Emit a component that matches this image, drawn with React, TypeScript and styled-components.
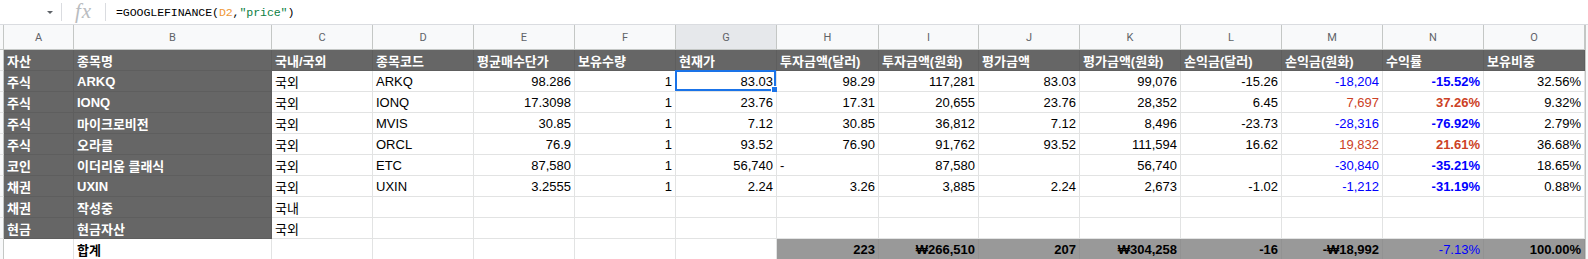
import React from 'react';
import styled, { createGlobalStyle } from 'styled-components';

const GlobalStyle = createGlobalStyle`
  html, body {
    margin: 0;
    padding: 0;
    background: #ffffff;
    overflow: hidden;
  }
  body {
    font-family: 'Liberation Sans', Arial, 'Noto Sans CJK KR', sans-serif;
  }
`;

/* column widths, including the 1px right border */
const COLS = '4px 70px 198px 101px 101px 101px 101px 101px 102px 100px 101px 101px 101px 101px 101px 101px 1fr';
const LETTERS = ['A', 'B', 'C', 'D', 'E', 'F', 'G', 'H', 'I', 'J', 'K', 'L', 'M', 'N', 'O'];

const BLUE = '#0000ff';
const RED = '#cc4125';

type Tone = 'plain' | 'blue' | 'red';

interface Holding {
  asset: string;
  name: string;
  region: string;
  code?: string;
  avg?: string;
  qty?: string;
  price?: string;
  invUsd?: string;
  invKrw?: string;
  evalUsd?: string;
  evalKrw?: string;
  plUsd?: string;
  plKrw?: string;
  rate?: string;
  weight?: string;
  tone?: Tone;
}

const holdings: Holding[] = [
  { asset: '주식', name: 'ARKQ', region: '국외', code: 'ARKQ', avg: '98.286', qty: '1', price: '83.03', invUsd: '98.29', invKrw: '117,281', evalUsd: '83.03', evalKrw: '99,076', plUsd: '-15.26', plKrw: '-18,204', rate: '-15.52%', weight: '32.56%', tone: 'blue' },
  { asset: '주식', name: 'IONQ', region: '국외', code: 'IONQ', avg: '17.3098', qty: '1', price: '23.76', invUsd: '17.31', invKrw: '20,655', evalUsd: '23.76', evalKrw: '28,352', plUsd: '6.45', plKrw: '7,697', rate: '37.26%', weight: '9.32%', tone: 'red' },
  { asset: '주식', name: '마이크로비전', region: '국외', code: 'MVIS', avg: '30.85', qty: '1', price: '7.12', invUsd: '30.85', invKrw: '36,812', evalUsd: '7.12', evalKrw: '8,496', plUsd: '-23.73', plKrw: '-28,316', rate: '-76.92%', weight: '2.79%', tone: 'blue' },
  { asset: '주식', name: '오라클', region: '국외', code: 'ORCL', avg: '76.9', qty: '1', price: '93.52', invUsd: '76.90', invKrw: '91,762', evalUsd: '93.52', evalKrw: '111,594', plUsd: '16.62', plKrw: '19,832', rate: '21.61%', weight: '36.68%', tone: 'red' },
  { asset: '코인', name: '이더리움 클래식', region: '국외', code: 'ETC', avg: '87,580', qty: '1', price: '56,740', invUsd: '-', invKrw: '87,580', evalUsd: '', evalKrw: '56,740', plUsd: '', plKrw: '-30,840', rate: '-35.21%', weight: '18.65%', tone: 'blue' },
  { asset: '채권', name: 'UXIN', region: '국외', code: 'UXIN', avg: '3.2555', qty: '1', price: '2.24', invUsd: '3.26', invKrw: '3,885', evalUsd: '2.24', evalKrw: '2,673', plUsd: '-1.02', plKrw: '-1,212', rate: '-31.19%', weight: '0.88%', tone: 'blue' },
  { asset: '채권', name: '작성중', region: '국내' },
  { asset: '현금', name: '현금자산', region: '국외' },
];

const headers = ['자산', '종목명', '국내/국외', '종목코드', '평균매수단가', '보유수량', '현재가', '투자금액(달러)', '투자금액(원화)', '평가금액', '평가금액(원화)', '손익금(달러)', '손익금(원화)', '수익률', '보유비중'];

/* ---------------------------- formula bar ---------------------------- */

const FormulaBar = styled.div`
  display: flex;
  align-items: center;
  height: 25px;
  box-sizing: border-box;
  border-bottom: 1px solid #dadce0;
  background: #ffffff;
`;

const NameBox = styled.div`
  width: 61px;
  height: 100%;
  display: flex;
  align-items: center;
  justify-content: flex-end;
  padding-right: 8px;
  box-sizing: border-box;
`;

const Caret = styled.span`
  width: 0;
  height: 0;
  border-left: 3px solid transparent;
  border-right: 3px solid transparent;
  border-top: 3px solid #5f6368;
  margin-top: 1px;
`;

const Divider = styled.span`
  width: 1px;
  height: 18px;
  background: #dadce0;
`;

const FxLabel = styled.span`
  width: 43px;
  text-align: center;
  font-family: 'Liberation Serif', 'DejaVu Serif', serif;
  font-style: italic;
  font-size: 21px;
  color: #b9bcc0;
  line-height: 1;
  margin-top: -2px;
  letter-spacing: 1px;
`;

const FormulaText = styled.span`
  padding-left: 10px;
  font-family: 'Liberation Mono', 'DejaVu Sans Mono', monospace;
  font-size: 11.6px;
  color: #000000;
  letter-spacing: -0.1px;
`;

const Ref = styled.span`
  color: #f09a38;
`;

const Str = styled.span`
  color: #0b8043;
`;

/* ------------------------------- grid -------------------------------- */

const Row = styled.div<{ $height: number }>`
  display: grid;
  grid-template-columns: ${COLS};
  height: ${(p) => p.$height}px;
`;

const ColHead = styled.div<{ $active?: boolean }>`
  display: flex;
  align-items: center;
  justify-content: center;
  box-sizing: border-box;
  background: ${(p) => (p.$active ? '#e6e8eb' : '#f8f9fa')};
  border-right: 1px solid #c4c7c5;
  border-bottom: 1px solid #c4c7c5;
  font-family: Roboto, 'Liberation Sans', sans-serif;
  font-size: 11px;
  color: #5f6368;
`;

const RowHead = styled.div`
  box-sizing: border-box;
  background: #f8f9fa;
  border-right: 1px solid #c4c7c5;
  border-bottom: 1px solid #e2e3e3;
`;

type Fill = 'none' | 'dark' | 'mid';

const Cell = styled.div<{ $fill?: Fill; $right?: boolean; $bold?: boolean; $color?: string }>`
  position: relative;
  display: flex;
  align-items: center;
  justify-content: ${(p) => (p.$right ? 'flex-end' : 'flex-start')};
  padding: 1px 3px 0 3px;
  box-sizing: border-box;
  overflow: visible;
  white-space: nowrap;
  font-family: 'Liberation Sans', Arial, 'Noto Sans CJK KR', sans-serif;
  font-size: 13px;
  font-weight: ${(p) => (p.$bold ? 700 : 400)};
  background: ${(p) => (p.$fill === 'dark' ? '#666666' : p.$fill === 'mid' ? '#999999' : '#ffffff')};
  color: ${(p) => p.$color ?? (p.$fill === 'dark' ? '#ffffff' : '#000000')};
  border-right: 1px solid ${(p) => (p.$fill === 'dark' ? '#5e5e5e' : p.$fill === 'mid' ? '#929292' : '#e2e3e3')};
  border-bottom: 1px solid ${(p) => (p.$fill === 'dark' ? '#5e5e5e' : p.$fill === 'mid' ? '#929292' : '#e2e3e3')};
`;

const Filler = styled.div`
  box-sizing: border-box;
  background: #f8f9fa;
  border-left: 1px solid #c4c7c5;
`;

const Selection = styled.div`
  position: absolute;
  inset: -1px 0 0 -1px;
  border: 2px solid #1a73e8;
  pointer-events: none;
  &:after {
    content: '';
    position: absolute;
    right: -5px;
    bottom: -5px;
    width: 6px;
    height: 6px;
    background: #1a73e8;
    border: 1px solid #ffffff;
  }
`;

const Sheet = styled.div`
  width: 1588px;
  background: #ffffff;
`;

const toneColor = (tone?: Tone) => (tone === 'blue' ? BLUE : tone === 'red' ? RED : undefined);

const HoldingRow = ({ h, selected }: { h: Holding; selected: boolean }) => {
  const c = toneColor(h.tone);
  return (
    <Row $height={21}>
      <RowHead />
      <Cell $fill="dark" $bold>{h.asset}</Cell>
      <Cell $fill="dark" $bold>{h.name}</Cell>
      <Cell>{h.region}</Cell>
      <Cell>{h.code}</Cell>
      <Cell $right>{h.avg}</Cell>
      <Cell $right>{h.qty}</Cell>
      <Cell $right>
        {h.price}
        {selected && <Selection />}
      </Cell>
      <Cell $right={h.invUsd !== '-'}>{h.invUsd}</Cell>
      <Cell $right>{h.invKrw}</Cell>
      <Cell $right>{h.evalUsd}</Cell>
      <Cell $right>{h.evalKrw}</Cell>
      <Cell $right>{h.plUsd}</Cell>
      <Cell $right $color={c}>{h.plKrw}</Cell>
      <Cell $right $bold $color={c}>{h.rate}</Cell>
      <Cell $right>{h.weight}</Cell>
      <Filler />
    </Row>
  );
};

const App = () => {
  return (
    <Sheet>
      <GlobalStyle />
      <FormulaBar>
        <NameBox>
          <Caret />
        </NameBox>
        <Divider />
        <FxLabel>fx</FxLabel>
        <Divider />
        <FormulaText>
          =GOOGLEFINANCE(<Ref>D2</Ref>,<Str>"price"</Str>)
        </FormulaText>
      </FormulaBar>

      <Row $height={25}>
        <ColHead />
        {LETTERS.map((l) => (
          <ColHead key={l} $active={l === 'G'}>
            {l}
          </ColHead>
        ))}
        <Filler />
      </Row>

      <Row $height={21}>
        <RowHead />
        {headers.map((t) => (
          <Cell key={t} $fill="dark" $bold>
            {t}
          </Cell>
        ))}
        <Filler />
      </Row>

      {holdings.map((h, i) => (
        <HoldingRow key={h.name} h={h} selected={i === 0} />
      ))}

      <Row $height={21}>
        <RowHead />
        <Cell />
        <Cell $bold>합계</Cell>
        <Cell />
        <Cell />
        <Cell />
        <Cell />
        <Cell />
        <Cell $fill="mid" $right $bold>223</Cell>
        <Cell $fill="mid" $right $bold>₩266,510</Cell>
        <Cell $fill="mid" $right $bold>207</Cell>
        <Cell $fill="mid" $right $bold>₩304,258</Cell>
        <Cell $fill="mid" $right $bold>-16</Cell>
        <Cell $fill="mid" $right $bold>-₩18,992</Cell>
        <Cell $fill="mid" $right $color={BLUE}>-7.13%</Cell>
        <Cell $fill="mid" $right $bold>100.00%</Cell>
        <Filler />
      </Row>
    </Sheet>
  );
};

export default App;
